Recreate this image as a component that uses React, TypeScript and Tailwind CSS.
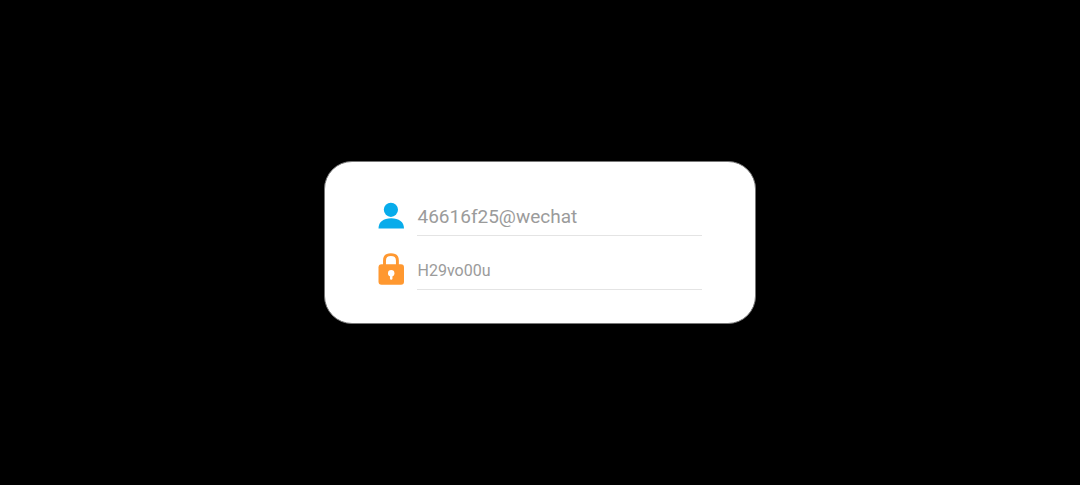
export default function App() {
  return (
    <main className="flex h-[485px] w-full items-center justify-center bg-black font-['Roboto',sans-serif]">
      <section className="flex h-[163px] w-[432px] flex-col rounded-[28px] border border-[#777] bg-white pt-[38px] pl-[53px]">
        <div className="flex h-9 gap-[13px]">
          <svg className="h-[30px] w-[26px] shrink-0" viewBox="0 0 26 30" fill="#08aceb">
            <circle cx="12.900" cy="9.800" r="7.100" />
            <path d="M.5 28.500C.5 22 5.500 18.300 13.200 18.300S26 22 26 28.500Z" />
          </svg>
          <div className="flex h-9 w-[285px] items-center border-b border-[#e4e4e4] pl-[0.5px] text-[19px] text-[#9b9b9b]">46616f25@wechat</div>
        </div>
        <div className="mt-[17px] flex h-[37px] gap-[13px]">
          <svg className="h-[33px] w-[26px] shrink-0" viewBox="0 0 26 33" fill="none">
            <path d="M6.500 13V7.500C6.500 3.500 8.800 1.600 12.900 1.600s6.500 1.900 6.500 5.900V13" stroke="#ff9830" strokeWidth="2.900" />
            <rect x=".5" y="11.200" width="25.500" height="20.500" rx="3" fill="#ff9830" />
            <circle cx="13.200" cy="20.200" r="3.200" fill="white" />
            <path d="M13.200 20v5.500" stroke="white" strokeWidth="2.500" strokeLinecap="round" />
          </svg>
          <div className="flex h-[37px] w-[285px] items-center border-b border-[#e4e4e4] pl-[0.5px] text-[16px] text-[#9b9b9b]">H29vo00u</div>
        </div>
      </section>
    </main>
  );
}
